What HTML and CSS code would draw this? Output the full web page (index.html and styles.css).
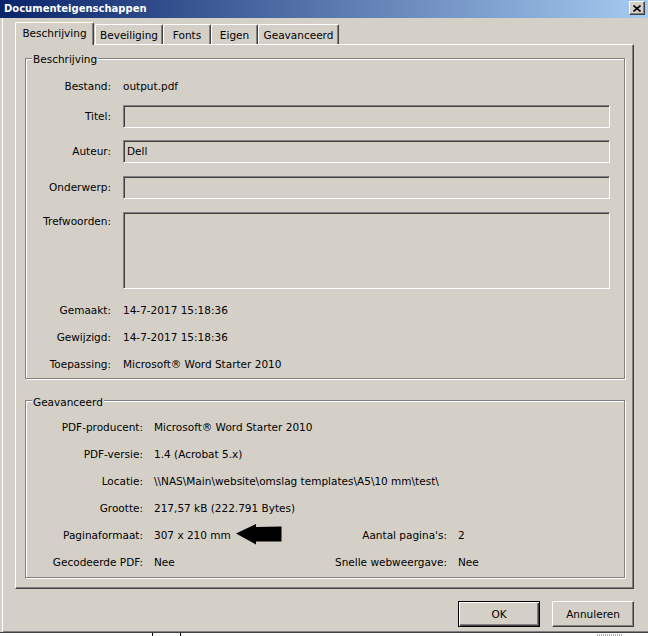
FILE: index.html
```html
<!DOCTYPE html>
<html lang="nl">
<head>
<meta charset="utf-8">
<title>Documenteigenschappen</title>
<link rel="stylesheet" href="styles.css">
</head>
<body>
<div class="window">
  <div class="titlebar">
    <span class="title">Documenteigenschappen</span>
    <button class="close" aria-label="Sluiten">
      <svg width="8" height="7" viewBox="0 0 8 7"><path d="M0.5 0.5 L7.5 6.5 M7.5 0.5 L0.5 6.5" stroke="#000" stroke-width="1.6" fill="none"/></svg>
    </button>
  </div>
  <div class="client">
    <div class="tabs">
      <div class="tab active t-beschrijving">Beschrijving</div>
      <div class="tab t-beveiliging">Beveiliging</div>
      <div class="tab t-fonts">Fonts</div>
      <div class="tab t-eigen">Eigen</div>
      <div class="tab t-geavanceerd">Geavanceerd</div>
    </div>
    <div class="panel">
      <div class="group g1">
        <span class="legend">Beschrijving</span>
        <div class="row"><span class="lbl">Bestand:</span><span class="val">output.pdf</span></div>
        <div class="field f-titel"><span class="lbl">Titel:</span><div class="input"></div></div>
        <div class="field f-auteur"><span class="lbl">Auteur:</span><div class="input">Dell</div></div>
        <div class="field"><span class="lbl">Onderwerp:</span><div class="input"></div></div>
        <div class="field tall"><span class="lbl">Trefwoorden:</span><div class="input"></div></div>
        <div class="row r-gemaakt"><span class="lbl">Gemaakt:</span><span class="val">14-7-2017 15:18:36</span></div>
        <div class="row"><span class="lbl">Gewijzigd:</span><span class="val">14-7-2017 15:18:36</span></div>
        <div class="row"><span class="lbl">Toepassing:</span><span class="val">Microsoft® Word Starter 2010</span></div>
      </div>
      <div class="group g2">
        <span class="legend">Geavanceerd</span>
        <div class="grid">
          <span class="lbl2">PDF-producent:</span><span class="span3">Microsoft® Word Starter 2010</span>
          <span class="lbl2">PDF-versie:</span><span class="span3">1.4 (Acrobat 5.x)</span>
          <span class="lbl2">Locatie:</span><span class="span3">\\NAS\Main\website\omslag templates\A5\10 mm\test\</span>
          <span class="lbl2">Grootte:</span><span class="span3">217,57 kB (222.791 Bytes)</span>
          <span class="lbl2">Paginaformaat:</span>
          <span class="with-arrow">307 x 210 mm
            <svg class="arrow" width="46" height="21" viewBox="0 0 46 21"><polygon points="0,9.5 20,0 20,3 45.5,2.5 45.5,17.5 20,17.5 20,20.5" fill="#000"/></svg>
          </span>
          <span class="lbl2">Aantal pagina's:</span><span>2</span>
          <span class="lbl2">Gecodeerde PDF:</span><span>Nee</span>
          <span class="lbl2">Snelle webweergave:</span><span>Nee</span>
        </div>
      </div>
    </div>
    <div class="buttons">
      <button class="btn default">OK</button>
      <button class="btn">Annuleren</button>
    </div>
  </div>
  <div class="below">
    <span class="tick t1"></span>
    <span class="tick t2"></span>
    <span class="dots"></span>
  </div>
</div>
</body>
</html>
```

FILE: styles.css
```css
html, body {
  margin: 0;
  padding: 0;
}
body {
  width: 648px;
  height: 636px;
  overflow: hidden;
  background: #fff;
  font-family: "DejaVu Sans", "Liberation Sans", sans-serif;
  font-size: 10.5px;
  color: #000;
}
.window {
  height: 636px;
  display: flex;
  flex-direction: column;
}
.titlebar {
  flex: none;
  height: 18px;
  box-sizing: border-box;
  display: flex;
  justify-content: space-between;
  align-items: flex-start;
  padding: 0 3px 0 4px;
  background: linear-gradient(to right, #0a246a 0%, #a6caf0 100%);
}
.title {
  color: #fff;
  font-weight: bold;
  font-size: 10px;
  line-height: 17px;
}
.close {
  width: 16px;
  height: 14px;
  margin-top: 1px;
  box-sizing: border-box;
  padding: 0;
  background: #d4d0c8;
  border: 1px solid;
  border-color: #fff #404040 #404040 #fff;
  box-shadow: inset -1px -1px 0 #808080;
  display: flex;
  align-items: center;
  justify-content: center;
}
.client {
  flex: none;
  height: 615px;
  box-sizing: border-box;
  background: #d4d0c8;
  display: flex;
  flex-direction: column;
  padding: 4px 14px 0 15px;
  border-bottom: 1px solid #404040;
  box-shadow: inset 2px 0 0 #d4d0c8, inset 3px 0 0 #fff, inset 0 -1px 0 #808080;
}
.tabs {
  display: flex;
  align-items: flex-end;
  height: 22px;
  position: relative;
  z-index: 1;
}
.tab {
  box-sizing: border-box;
  height: 20px;
  border: 1px solid;
  border-color: #fff #404040 transparent #fff;
  border-bottom: none;
  border-radius: 2px 2px 0 0;
  box-shadow: inset -1px 0 0 #808080;
  text-align: center;
  padding-top: 3px;
  line-height: 14px;
  white-space: nowrap;
}
.tab.active {
  height: 23px;
  margin-bottom: -1px;
  background: #d4d0c8;
}
.t-beschrijving { width: 79px; }
.t-beveiliging { width: 68px; margin-left: 1px; }
.t-fonts { width: 48px; }
.t-eigen { width: 47px; }
.t-geavanceerd { width: 81px; }

.panel {
  box-sizing: border-box;
  height: 545px;
  border: 1px solid;
  border-color: #fff #404040 #404040 #fff;
  box-shadow: inset -1px -1px 0 #808080;
  padding: 13px 8px 0 9px;
}
.group {
  position: relative;
  box-sizing: border-box;
  border: 1px solid #808080;
  box-shadow: inset 1px 1px 0 #fff, 1px 1px 0 #fff;
}
.legend {
  position: absolute;
  top: -6px;
  left: 6px;
  padding: 0 1px;
  line-height: 13px;
  background: #d4d0c8;
}
.g2 .legend {
  top: -5px;
}
.g1 {
  height: 321px;
  padding: 13px 14px 0 0;
  display: flex;
  flex-direction: column;
}
.g2 {
  height: 178px;
  margin-top: 21px;
  padding: 12px 14px 0 0;
}
.row {
  display: flex;
  align-items: center;
  height: 27px;
}
.lbl {
  flex: none;
  width: 85px;
  margin-right: 12px;
  text-align: right;
  white-space: nowrap;
}
.val {
  white-space: nowrap;
}
.field {
  display: flex;
  margin-top: 13px;
}
.field .lbl {
  line-height: 23px;
}
.f-titel { margin-top: 6px; }
.f-auteur { margin-top: 12px; }
.input {
  flex: 1;
  height: 23px;
  box-sizing: border-box;
  border: 1px solid;
  border-color: #808080 #fff #fff #808080;
  box-shadow: inset 1px 1px 0 #404040, inset -1px -1px 0 #d4d0c8;
  background: #d4d0c8;
  padding: 0 3px;
  line-height: 20px;
}
.field.tall .input {
  height: 77px;
}
.field.tall .lbl {
  line-height: 18px;
}
.r-gemaakt { margin-top: 7px; }

.grid {
  display: grid;
  grid-template-columns: 117px 170px 112px 1fr;
  grid-auto-rows: 27px;
  column-gap: 11px;
  align-items: center;
  white-space: nowrap;
}
.lbl2 {
  text-align: right;
}
.span3 {
  grid-column: 2 / 5;
}
.with-arrow {
  display: flex;
  align-items: center;
}
.arrow {
  margin-left: 5px;
  flex: none;
}
.buttons {
  display: flex;
  justify-content: flex-end;
  gap: 12px;
  margin-top: 12px;
}
.btn {
  width: 82px;
  height: 26px;
  box-sizing: border-box;
  padding: 0;
  font: inherit;
  color: #000;
  background: #d4d0c8;
  border: 1px solid;
  border-color: #fff #404040 #404040 #fff;
  box-shadow: inset -1px -1px 0 #808080;
}
.btn.default {
  border: 1px solid #000;
  box-shadow: inset 1px 1px 0 #fff, inset -1px -1px 0 #404040, inset -2px -2px 0 #808080;
}
.below {
  flex: none;
  height: 3px;
  display: flex;
}
.tick {
  width: 1px;
  height: 3px;
  background: #000;
}
.t1 { margin-left: 152px; }
.t2 { margin-left: 27px; }
.dots {
  margin-left: 416px;
  width: 26px;
  height: 2px;
  margin-top: 1px;
  background: repeating-linear-gradient(to right, #b0b0b0 0 1px, #fff 1px 2px);
}
```
